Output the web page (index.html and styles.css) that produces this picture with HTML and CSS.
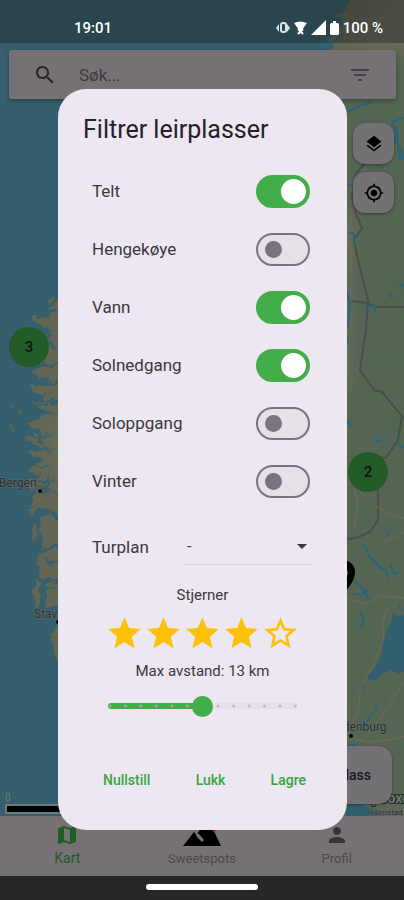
FILE: index.html
```html
<!DOCTYPE html>
<html lang="no">
<head>
    <meta charset="UTF-8">
    <meta name="viewport" content="width=device-width, initial-scale=1.0">
    <title>Filtrer leirplasser</title>
    <link rel="stylesheet" href="styles.css">
</head>
<body>
    <div class="app">
        <main class="map-view">
            <svg class="map" viewBox="0 0 404 816" preserveAspectRatio="xMidYMin slice" aria-hidden="true">
                <defs>
                    <filter id="coast" x="-10%" y="-10%" width="120%" height="120%">
                        <feTurbulence type="fractalNoise" baseFrequency="0.09" numOctaves="3" seed="4" result="noise"/>
                        <feDisplacementMap in="SourceGraphic" in2="noise" scale="12" xChannelSelector="R" yChannelSelector="G"/>
                    </filter>
                    <filter id="soft"><feGaussianBlur stdDeviation="7"/></filter>
                </defs>
                <rect width="404" height="816" fill="#355f6c"/>
                <g filter="url(#coast)">
                    <path fill="#636654" d="M430 -20H355L348 8 336 15 344 24 326 38 332 48 312 62 250 140 120 250 64 296 52 306 58 312 48 318 36 318 42 328 52 334 30 358 50 364 30 372 50 380 28 388 50 396 30 406 54 412 28 424 42 430 22 440 40 446 26 454 44 460 26 470 42 474 24 484 36 494 30 504 60 512 80 680 200 760 310 770 340 800 352 830H430Z"/>
                    <path fill="#636654" d="M38 522l14-8 10 10-6 20-14 4zM32 528l4-2 1 12-4 2zM42 552l20-6v32l-18 2-6-14zM36 576l4 2 1 26-5 4-3-16zM44 582l16-2v26l-14 2zM50 632l14-10v42l-8-6-5-14z"/>
                    <path fill="#636654" d="M32 314l6 2-2 5-5-2zM48 299l4-2 2 4-4 2zM8 402l6 2-3 3zM10 424l4 4-2 3zM18 410l5 2-3 4zM30 508l4-3 2 6-4 2z"/>
                    <path class="fjord" d="M30 340l14 6 16 0M28 364l18-2 14 4M30 382l14 2 14-4M22 400l16 4 22-4M28 418l12-6 18 4M24 436l14 2 20-6M26 450l16-2 16 4M20 466l14-2 8 4 18-4M28 478l20 6 12-4M26 492l14-4 18 6M44 326l6 20M38 426l6 22M50 468l-6 26M46 560l14 4M42 590l16-6"/>
                </g>
                <g filter="url(#soft)">
                    <path fill="#546552" d="M340 60h80v740h-50l-30-20z"/>
                    <path fill="#6a6c58" d="M384 0h30v40l-26 10-30-8zM50 420h14v70l-14-20zM340 210l16 10-6 60 0 100-12 20z"/>
                </g>
                <path fill="#4e664e" d="M372 282l14-6 18 8v18l-20 6zM366 350l18-8 20 12v14l-26-2zM352 390l12-8 12 14-10 8zM380 410l24 4v20l-18-4z" opacity=".6"/>
                <path class="border" d="M366 162l-10 12-4 24 4 16 6 14-8 12 4 20 10 40-2 30-6 40 14 20 8 2 20 24-4 24-12 18-22-2-4 14 4 16M378 490v30l-8 12-14 6-10 1M352 301l14 2 12 4 26 0"/>
                <g class="water-lines">
                    <path d="M318 48l14-4 10-10M300 68l12-12M347 112l12-6 14-4M404 118l-12 4 2 14 6 12 4 12M396 126l4 34M376 166l8 2M347 186l6-2M349 232l5 2v12M346 290l4 14-2 24M366 306l8 0 2 8M388 292l4 6M400 288l4-4M374 440l8 2M396 442l8 6M347 420l4 6M347 335l1 8"/>
                    <path d="M364 544l6 14 6 6M372 558l8 10 6 2 2 8M390 564l4 10 4-2M351 578l12 10 6 12M354 594l8 0 6-4M360 612l4 8-3 8M386 530l3 6M398 604l4 6M376 704v6M366 722l6-8M348 746l12-2M361 690l4-4"/>
                </g>
                <path class="lake" d="M393 612l4 4 6-2 6 4v50l-10 6-8-4-10 4-4 6-8 0-2-4 8-8 6-12 2-14 4-12 4-8zM346 802l12-1 8 6 12 3 6 6h-38z"/>
                <g class="roads">
                    <path d="M354 486l4 18-4 24M360 492l16 14 12 8 16 4M346 598l20 6 14-8 24 2M388 606l-6 18 2 14-8 22-10 18-6 14-2 22-12 18M404 680l-14 24-14 20-12 14-8 10-10 4M346 736l20 6 22-2 16-4M382 544l22-12M349 700v40"/>
                </g>
                <circle cx="40" cy="491" r="2" fill="#000"/>
                <circle cx="58" cy="622" r="2" fill="#000"/>
                <circle cx="351" cy="736" r="2" fill="#000"/>
                <g class="place-names">
                    <text x="-1" y="487">Bergen</text>
                    <text x="34" y="618">Stavanger</text>
                    <text x="326" y="731">Fredenburg</text>
                    <text class="small" x="368" y="815">Halmstad</text>
                </g>
                <path fill="#000" d="M342 560c8 0 13 5 13 12 0 8-5 14-13 24-8-10-13-16-13-24 0-7 5-12 13-12z"/>
                <circle cx="344" cy="573" r="4" fill="#555b4e"/>
                <text class="attribution" x="352" y="803">Mapbox</text>
            </svg>

            <div class="status-bar">
                <span class="time">19:01</span>
                <div class="status-icons">
                    <svg width="14" height="12" viewBox="0 0 14 12"><rect x="5" y="1" width="5" height="9" rx="2" fill="none" stroke="#dce5e6" stroke-width="2"/><path d="M3 2L0 6l3 4zM11 2l3 4-3 4z" fill="#dce5e6"/></svg>
                    <svg width="13" height="14" viewBox="0 0 13 14"><path d="M0 2Q6-1 13 2L8 9H5z" fill="#fff"/><path d="M4 8l5 5M9 8l-5 5" stroke="#fff" stroke-width="2"/></svg>
                    <svg width="15" height="15" viewBox="0 0 15 15"><path d="M15 0v15H0z" fill="#fff"/></svg>
                    <svg width="9" height="14" viewBox="0 0 9 14"><path d="M3 0h3v2h2l1 1v10l-1 1H1l-1-1V3l1-1h2z" fill="#fff"/></svg>
                    <span>100 %</span>
                </div>
            </div>

            <div class="search-bar">
                <svg width="24" height="24" viewBox="0 0 24 24" fill="#272528"><path d="M15.5 14h-.79l-.28-.27C15.41 12.59 16 11.11 16 9.5 16 5.91 13.09 3 9.5 3S3 5.91 3 9.5 5.91 16 9.5 16c1.61 0 3.09-.59 4.23-1.57l.27.28v.79l5 4.99L20.49 19l-4.99-5zm-6 0C7.01 14 5 11.99 5 9.5S7.01 5 9.5 5 14 7.01 14 9.5 11.99 14 9.5 14z"/></svg>
                <input type="text" placeholder="Søk..." aria-label="Søk">
                <button type="button" aria-label="Filter">
                    <svg width="24" height="24" viewBox="0 0 24 24" fill="#454247"><path d="M10 18h4v-2h-4v2zM3 6v2h18V6H3zm3 7h12v-2H6v2z"/></svg>
                </button>
            </div>

            <div class="map-tools">
                <button type="button" aria-label="Kartlag">
                    <svg width="20" height="20" viewBox="0 0 24 24"><path d="M11.99 18.54l-7.37-5.73L3 14.07l9 7 9-7-1.63-1.27-7.38 5.74zM12 16l7.36-5.73L21 9l-9-7-9 7 1.63 1.27L12 16z"/></svg>
                </button>
                <button type="button" aria-label="Min posisjon">
                    <svg width="20" height="20" viewBox="0 0 24 24"><path d="M12 8c-2.21 0-4 1.79-4 4s1.79 4 4 4 4-1.79 4-4-1.79-4-4-4zm8.94 3A8.994 8.994 0 0 0 13 3.06V1h-2v2.06A8.994 8.994 0 0 0 3.06 11H1v2h2.06A8.994 8.994 0 0 0 11 20.94V23h2v-2.06A8.994 8.994 0 0 0 20.94 13H23v-2h-2.06zM12 19c-3.87 0-7-3.13-7-7s3.13-7 7-7 7 3.13 7 7-3.13 7-7 7z"/></svg>
                </button>
            </div>

            <span class="cluster cluster-west">3</span>
            <span class="cluster cluster-east">2</span>

            <button type="button" class="add-camp">Ny leirplass</button>
            <div class="scale"><span>0</span><div class="scale-bar"></div></div>
        </main>

        <nav class="bottom-nav">
            <a href="#kart" class="active">
                <svg width="24" height="24" viewBox="0 0 24 24" fill="#1c5e23"><path d="M20.5 3l-.16.03L15 5.1 9 3 3.36 4.9c-.21.07-.36.25-.36.48V20.5c0 .28.22.5.5.5l.16-.03L9 18.9l6 2.1 5.64-1.9c.21-.07.36-.25.36-.48V3.5c0-.28-.22-.5-.5-.5zM15 19l-6-2.11V5l6 2.11V19z"/></svg>
                <span>Kart</span>
            </a>
            <a href="#sweetspots">
                <svg width="40" height="24" viewBox="0 0 40 24"><path d="M1 23L12 9l3 3 4-8h11l9 19z"/><path d="M13 10l4 1 5 6-2 2-5-5z" fill="#777377"/><path d="M29 5h6l-3 5z" fill="#a5121c"/></svg>
                <span>Sweetspots</span>
            </a>
            <a href="#profil">
                <svg width="24" height="24" viewBox="0 0 24 24" fill="#373438"><path d="M12 12c2.21 0 4-1.79 4-4s-1.79-4-4-4-4 1.79-4 4 1.79 4 4 4zm0 2c-2.67 0-8 1.34-8 4v2h16v-2c0-2.66-5.33-4-8-4z"/></svg>
                <span>Profil</span>
            </a>
        </nav>
        <div class="system-bar"><div class="home-handle"></div></div>

        <div class="overlay">
            <form class="dialog" role="dialog" aria-labelledby="dialog-title">
                <h1 id="dialog-title">Filtrer leirplasser</h1>
                <div class="switches">
                    <label class="row">Telt <input type="checkbox" class="switch" checked></label>
                    <label class="row">Hengekøye <input type="checkbox" class="switch"></label>
                    <label class="row">Vann <input type="checkbox" class="switch" checked></label>
                    <label class="row">Solnedgang <input type="checkbox" class="switch" checked></label>
                    <label class="row">Soloppgang <input type="checkbox" class="switch"></label>
                    <label class="row">Vinter <input type="checkbox" class="switch"></label>
                </div>
                <div class="plan">
                    <label for="turplan">Turplan</label>
                    <div class="select-wrap">
                        <select id="turplan"><option>-</option></select>
                        <svg width="10" height="5" viewBox="0 0 10 5"><path d="M0 0h10L5 5z" fill="#3b383d"/></svg>
                    </div>
                </div>
                <p class="caption" id="stars-label">Stjerner</p>
                <div class="stars" role="group" aria-labelledby="stars-label">
                    <button type="button" aria-label="1 stjerne"><svg viewBox="0 0 24 24"><path d="M12 17.27L18.18 21l-1.64-7.03L22 9.24l-7.19-.61L12 2 9.19 8.63 2 9.24l5.46 4.73L5.82 21z"/></svg></button>
                    <button type="button" aria-label="2 stjerner"><svg viewBox="0 0 24 24"><path d="M12 17.27L18.18 21l-1.64-7.03L22 9.24l-7.19-.61L12 2 9.19 8.63 2 9.24l5.46 4.73L5.82 21z"/></svg></button>
                    <button type="button" aria-label="3 stjerner"><svg viewBox="0 0 24 24"><path d="M12 17.27L18.18 21l-1.64-7.03L22 9.24l-7.19-.61L12 2 9.19 8.63 2 9.24l5.46 4.73L5.82 21z"/></svg></button>
                    <button type="button" aria-label="4 stjerner"><svg viewBox="0 0 24 24"><path d="M12 17.27L18.18 21l-1.64-7.03L22 9.24l-7.19-.61L12 2 9.19 8.63 2 9.24l5.46 4.73L5.82 21z"/></svg></button>
                    <button type="button" aria-label="5 stjerner"><svg viewBox="0 0 24 24"><path d="M22 9.24l-7.19-.62L12 2 9.19 8.63 2 9.24l5.46 4.73L5.82 21 12 17.27 18.18 21l-1.63-7.03L22 9.24zM12 15.4l-3.76 2.27 1-4.28-3.32-2.88 4.38-.38L12 6.1l1.71 4.04 4.38.38-3.32 2.88 1 4.28L12 15.4z"/></svg></button>
                </div>
                <label class="caption" for="distance">Max avstand: 13 km</label>
                <input type="range" id="distance" class="slider" min="1" max="25" step="2" value="13">
                <div class="actions">
                    <button type="button">Nullstill</button>
                    <button type="button">Lukk</button>
                    <button type="submit">Lagre</button>
                </div>
            </form>
        </div>
    </div>
</body>
</html>
```
FILE: styles.css
```css
* {
    box-sizing: border-box;
}
body {
    margin: 0;
    font-family: Roboto, "Liberation Sans", sans-serif;
    color: #3b383f;
}
button {
    padding: 0;
    border: none;
    background: none;
    font-family: inherit;
    cursor: pointer;
}
.app {
    position: relative;
    display: flex;
    flex-direction: column;
    min-height: 100vh;
}

/* map */
.map-view {
    position: relative;
    flex: 1;
    overflow: hidden;
    background-color: #355f6c;
}
.map {
    position: absolute;
    inset: 0;
    width: 100%;
    height: 100%;
}
.fjord {
    fill: none;
    stroke: #355f6c;
    stroke-width: 2;
}
.border {
    fill: none;
    stroke: #4b4d4d;
    stroke-width: 2;
}
.water-lines {
    fill: none;
    stroke: #28657c;
    stroke-width: 2;
}
.lake {
    fill: #315f70;
}
.roads {
    fill: none;
    stroke: #77675a;
    stroke-width: 1;
}
.place-names {
    font-size: 12px;
    fill: #2a2d30;
    stroke: #62716c;
    stroke-width: 1;
    paint-order: stroke;
}
.place-names .small {
    font-size: 8px;
}
.attribution {
    font-size: 14px;
    font-weight: 700;
    fill: #6c7a6b;
    stroke: #1e2c26;
    stroke-width: 2;
    paint-order: stroke;
}

.status-bar {
    position: relative;
    display: flex;
    justify-content: space-between;
    align-items: center;
    height: 43px;
    padding: 12px 21px 0 74px;
    background-color: rgba(30, 30, 34, 0.4);
    color: #fff;
    font-size: 15px;
    font-weight: 500;
}
.status-icons {
    display: flex;
    align-items: center;
    gap: 4px;
}
.search-bar {
    position: relative;
    display: flex;
    align-items: center;
    height: 49px;
    margin: 7px 8px 0 9px;
    padding: 0 24px;
    border-radius: 3px;
    background-color: #757175;
    box-shadow: 0 2px 4px rgba(0, 0, 0, 0.3);
}
.search-bar input {
    flex: 1;
    min-width: 0;
    margin-left: 22px;
    padding: 0;
    border: none;
    background: none;
    font-family: inherit;
    font-size: 17px;
}
.search-bar input::placeholder {
    color: #3d3a3e;
}
.search-bar button {
    height: 24px;
}
.map-tools {
    position: absolute;
    top: 123px;
    right: 10px;
    display: grid;
    gap: 8px;
}
.map-tools button {
    display: flex;
    align-items: center;
    justify-content: center;
    width: 41px;
    height: 41px;
    border-radius: 12px;
    background-color: #737174;
    box-shadow: 0 1px 3px rgba(0, 0, 0, 0.4);
}
.cluster {
    position: absolute;
    width: 40px;
    height: 40px;
    border-radius: 50%;
    background-color: #235b29;
    color: #0b150c;
    font-size: 15px;
    font-weight: 500;
    line-height: 40px;
    text-align: center;
}
.cluster-west {
    top: 327px;
    left: 9px;
}
.cluster-east {
    top: 452px;
    right: 16px;
}
.add-camp {
    position: absolute;
    right: 12px;
    bottom: 12px;
    height: 58px;
    padding: 0 21px;
    border-radius: 14px;
    background-color: #737174;
    box-shadow: 0 1px 3px rgba(0, 0, 0, 0.4);
    color: #1a181b;
    font-size: 14px;
    font-weight: 500;
}
.scale {
    position: absolute;
    bottom: 2px;
    left: 5px;
    color: #7b7b70;
    font-size: 10px;
    line-height: 12px;
}
.scale-bar {
    width: 90px;
    height: 10px;
    border: 2px solid #6c7a7e;
    background-color: #000;
}

/* bottom */
.bottom-nav {
    display: grid;
    grid-template-columns: repeat(3, 1fr);
    height: 60px;
    padding-top: 7px;
    background-color: #757175;
}
.bottom-nav a {
    display: flex;
    flex-direction: column;
    align-items: center;
    color: #4c494d;
    font-size: 13px;
    line-height: 23px;
    text-decoration: none;
}
.bottom-nav .active {
    color: #1c5e23;
    font-size: 14px;
}
.system-bar {
    display: flex;
    justify-content: center;
    height: 24px;
    padding-top: 8px;
    background-color: #272727;
}
.home-handle {
    width: 112px;
    height: 6px;
    border-radius: 3px;
    background-color: #fff;
}

/* dialog */
.overlay {
    position: absolute;
    inset: 0;
    display: flex;
    align-items: center;
    padding: 19px 57px 0 58px;
}
.dialog {
    display: flex;
    flex-direction: column;
    width: 100%;
    padding: 25px 25px 33px;
    border-radius: 28px;
    background-color: #ede7f2;
}
.dialog h1 {
    margin: 0;
    color: #242127;
    font-size: 25px;
    font-weight: 400;
    line-height: 32px;
}
.switches {
    padding: 16px 12px 0 9px;
}
.row {
    display: flex;
    align-items: center;
    justify-content: space-between;
    height: 58px;
    font-size: 17px;
}
.switch {
    appearance: none;
    display: flex;
    align-items: center;
    width: 54px;
    height: 33px;
    margin: 0;
    padding: 0 7px;
    border: 2px solid #7a747f;
    border-radius: 17px;
    background-color: #e6e0e9;
}
.switch::before {
    content: "";
    width: 17px;
    height: 17px;
    border-radius: 50%;
    background-color: #7a747f;
}
.switch:checked {
    justify-content: flex-end;
    padding: 0 2px;
    border-color: #43ad4a;
    background-color: #43ad4a;
}
.switch:checked::before {
    width: 25px;
    height: 25px;
    background-color: #fff;
}
.plan {
    display: flex;
    align-items: center;
    justify-content: space-between;
    margin-top: 19px;
    padding: 0 9px;
    font-size: 17px;
}
.select-wrap {
    display: flex;
    align-items: center;
    width: 130px;
    height: 36px;
    padding-right: 6px;
    border-bottom: 1px solid #d6d0da;
}
.select-wrap select {
    appearance: none;
    flex: 1;
    height: 35px;
    padding: 0 4px;
    border: none;
    background: none;
    color: inherit;
    font-family: inherit;
    font-size: 16px;
}
.caption {
    margin: 0;
    font-size: 15px;
    line-height: 20px;
    text-align: center;
}
p.caption {
    margin-top: 20px;
}
.stars {
    display: flex;
    justify-content: center;
    margin: 8px 0;
}
.stars button {
    width: 39px;
    height: 40px;
}
.stars svg {
    display: block;
    width: 39px;
    height: 39px;
    fill: #ffc00a;
}
.slider {
    appearance: none;
    height: 22px;
    margin: 14px 25px 0;
    background: none;
}
.slider::-webkit-slider-runnable-track {
    height: 6px;
    border-radius: 3px;
    background:
        radial-gradient(circle at 2px 3px, rgba(175, 180, 178, 0.8) 1px, transparent 2px) 0 0 / calc((100% + 12px) / 13) 6px,
        linear-gradient(to right, #43ad4a 50%, #e6e0ea 50%);
}
.slider::-webkit-slider-thumb {
    appearance: none;
    width: 21px;
    height: 21px;
    margin-top: -7px;
    border-radius: 50%;
    background-color: #43ad4a;
}
.actions {
    display: flex;
    justify-content: space-between;
    margin-top: 46px;
    padding: 0 16px 0 20px;
}
.actions button {
    height: 34px;
    color: #36a53e;
    font-size: 14px;
    font-weight: 500;
}
```
